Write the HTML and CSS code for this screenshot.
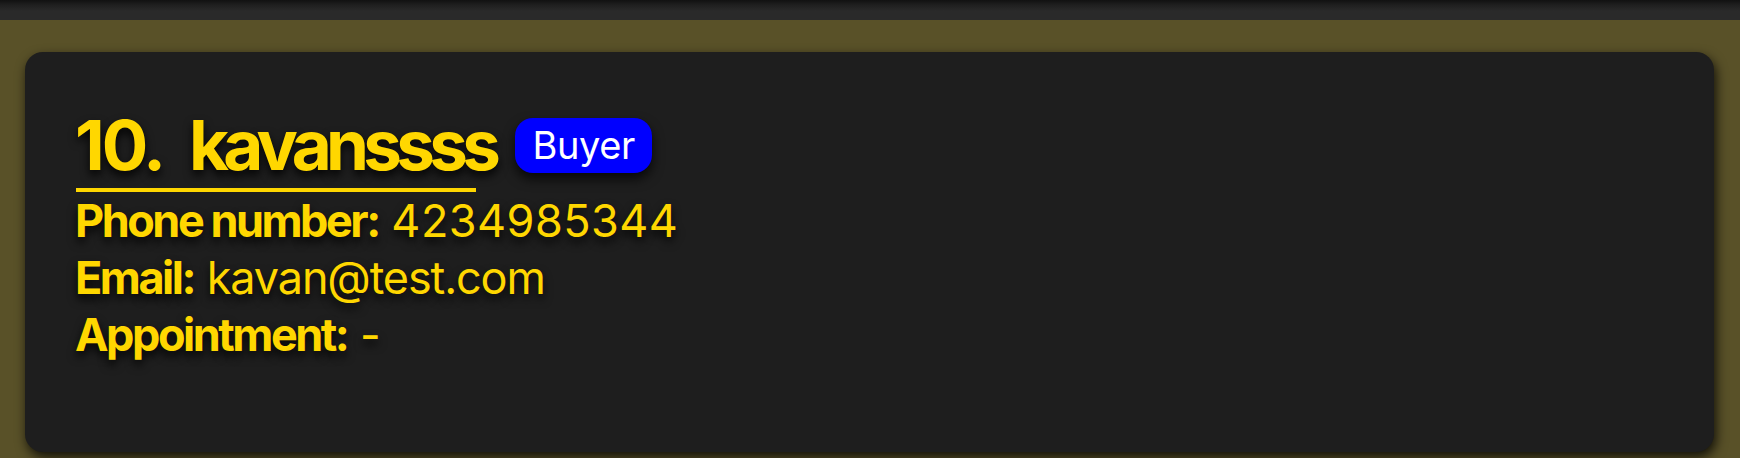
FILE: index.html
```html
<!DOCTYPE html>
<html lang="en">
<head>
<meta charset="utf-8">
<title>Client card</title>
<link rel="stylesheet" href="styles.css">
</head>
<body>
  <div class="prev-cell"></div>
  <div class="list">
    <div class="card">
      <div class="title-row">
        <span class="index">10.</span>
        <span class="name">kavanssss</span>
        <span class="badge">Buyer</span>
      </div>
      <div class="underline"></div>
      <div class="field"><span class="label">Phone number:</span> <span class="value value-phone">4234985344</span></div>
      <div class="field"><span class="label">Email:</span> <span class="value value-email">kavan@test.com</span></div>
      <div class="field"><span class="label">Appointment:</span> <span class="value">-</span></div>
    </div>
  </div>
</body>
</html>
```

FILE: styles.css
```css
html, body {
  margin: 0;
  padding: 0;
}
body {
  width: 1740px;
  height: 458px;
  overflow: hidden;
  background: #595128;
  font-family: "Inter", "Noto Sans", sans-serif;
}
.prev-cell {
  height: 20px;
  background: linear-gradient(to bottom, #111111 0px, #1f1f1f 5px, #2a2a2a 11px, #2a2a2a 20px);
}
.list {
  padding: 32px 26px 0 25px;
}
.card {
  height: 400px;
  box-sizing: border-box;
  padding: 58px 50px 0 50px;
  background: #1e1e1e;
  border-radius: 18px;
  box-shadow: 2px 5px 12px rgba(0, 0, 0, 0.8);
  color: #ffd700;
}
.title-row {
  display: flex;
  align-items: center;
  height: 70px;
  font-size: 69px;
  line-height: 70px;
  font-weight: 700;
  text-shadow: 0 5px 10px rgba(0, 0, 0, 0.9);
}
.index {
  letter-spacing: -0.045em;
  margin-right: 26px;
}
.name {
  letter-spacing: -0.082em;
  margin-right: 20px;
}
.badge {
  display: inline-flex;
  align-items: center;
  justify-content: center;
  width: 137px;
  height: 55px;
  box-sizing: border-box;
  border-radius: 18px;
  background: #0000ff;
  color: #ffffff;
  font-size: 38px;
  font-weight: 400;
  letter-spacing: -0.01em;
  text-shadow: none;
  box-shadow: 0 6px 12px rgba(0, 0, 0, 0.75);
}
.underline {
  width: 400px;
  height: 4px;
  margin-top: 8px;
  margin-left: 1px;
  background: #ffd700;
}
.field {
  font-size: 45px;
  line-height: 57px;
  height: 57px;
  white-space: nowrap;
  text-shadow: 0 5px 10px rgba(0, 0, 0, 0.9);
}
.label {
  font-weight: 700;
  letter-spacing: -0.055em;
}
.value {
  font-weight: 400;
}
.value-phone {
  letter-spacing: 0.01em;
}
.value-email {
  letter-spacing: -0.025em;
}
```
